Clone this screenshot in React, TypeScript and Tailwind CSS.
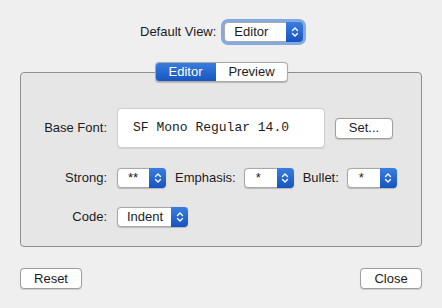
import React from 'react';

const Chevrons = () => (
  <svg width="8" height="12" viewBox="0 0 8 12" fill="none" stroke="white" strokeWidth="1.4" strokeLinecap="round" strokeLinejoin="round">
    <path d="M1.5 4.5 L4 2 L6.5 4.5" />
    <path d="M1.5 7.5 L4 10 L6.5 7.5" />
  </svg>
);

interface PopupProps {
  value: string;
  width: string;
  focused?: boolean;
  pad?: string;
}

const Popup: React.FC<PopupProps> = ({ value, width, focused, pad = 'pl-[9px]' }) => (
  <div
    className={`flex h-[20px] ${width} shrink-0 rounded-[4px] border border-[#a9a9a9] bg-white shadow-[0_0.5px_1px_rgba(0,0,0,0.2)] ${
      focused ? 'ring-[3px] ring-[#84a9e0]' : ''
    }`}
  >
    <span className={`flex-1 ${pad} text-[13px] leading-[18px] text-[#1c1c1c]`}>{value}</span>
    <div className="-my-px -mr-px flex w-[17px] items-center justify-center rounded-r-[4px] bg-gradient-to-b from-[#3a7ee0] to-[#1654bd]">
      <Chevrons />
    </div>
  </div>
);

const PushButton: React.FC<{ label: string; width: string }> = ({ label, width }) => (
  <div
    className={`flex h-[21px] ${width} items-center justify-center rounded-[4px] border border-[#9e9e9e] bg-white text-[13px] text-[#1c1c1c] shadow-[0_0.5px_1px_rgba(0,0,0,0.15)]`}
  >
    {label}
  </div>
);

export default function App() {
  return (
    <div
      className="flex h-[308px] w-[442px] flex-col bg-[#efefef] px-[20px] text-[#1c1c1c]"
      style={{ fontFamily: '"Liberation Sans", Arial, sans-serif' }}
    >
      {/* default view row */}
      <div className="mt-[22px] flex items-center pl-[120px]">
        <span className="mr-[8px] text-[13px]">Default View:</span>
        <Popup value="Editor" width="w-[79px]" focused />
      </div>

      {/* settings box */}
      <div className="mt-[30px] flex h-[175px] flex-col rounded-[4px] border border-[#8f8f8f] bg-[#e6e6e6]">
        <div className="-mt-[11px] flex justify-center pl-[1px]">
          <div className="flex h-[20px] overflow-hidden rounded-[4px] border border-[#a9a9a9] bg-white text-[13px] shadow-[0_0.5px_1px_rgba(0,0,0,0.2)]">
            <div className="-my-px -ml-px flex w-[61px] items-center justify-center bg-gradient-to-b from-[#3a7ee0] to-[#1654bd] text-white">
              Editor
            </div>
            <div className="flex w-[71px] items-center justify-center">Preview</div>
          </div>
        </div>

        <div className="mt-[26px] flex items-center">
          <span className="w-[86px] text-right text-[13px]">Base Font:</span>
          <div className="ml-[10px] flex h-[40px] w-[208px] items-center justify-center rounded-[4px] border border-[#cfcfcf] bg-white pr-[20px] shadow-[0_0.5px_1px_rgba(0,0,0,0.1)]">
            <span className="text-[13px]" style={{ fontFamily: '"Liberation Mono", "DejaVu Sans Mono", monospace' }}>
              SF Mono Regular 14.0
            </span>
          </div>
          <div className="ml-[10px]">
            <PushButton label="Set..." width="w-[58px]" />
          </div>
        </div>

        <div className="mt-[20px] flex items-center">
          <span className="w-[86px] text-right text-[13px]">Strong:</span>
          <div className="ml-[10px]">
            <Popup value="**" width="w-[49px]" pad="pl-[10px]" />
          </div>
          <span className="ml-[9px] text-[13px]">Emphasis:</span>
          <div className="ml-[8px]">
            <Popup value="*" width="w-[50px]" pad="pl-[11px]" />
          </div>
          <span className="ml-[9px] text-[13px]">Bullet:</span>
          <div className="ml-[8px]">
            <Popup value="*" width="w-[50px]" pad="pl-[11px]" />
          </div>
        </div>

        <div className="mt-[19px] flex items-center">
          <span className="w-[86px] text-right text-[13px]">Code:</span>
          <div className="ml-[10px]">
            <Popup value="Indent" width="w-[71px]" pad="pl-[9px]" />
          </div>
        </div>
      </div>

      {/* footer buttons */}
      <div className="mt-[21px] flex justify-between">
        <PushButton label="Reset" width="w-[62px]" />
        <PushButton label="Close" width="w-[62px]" />
      </div>
    </div>
  );
}
